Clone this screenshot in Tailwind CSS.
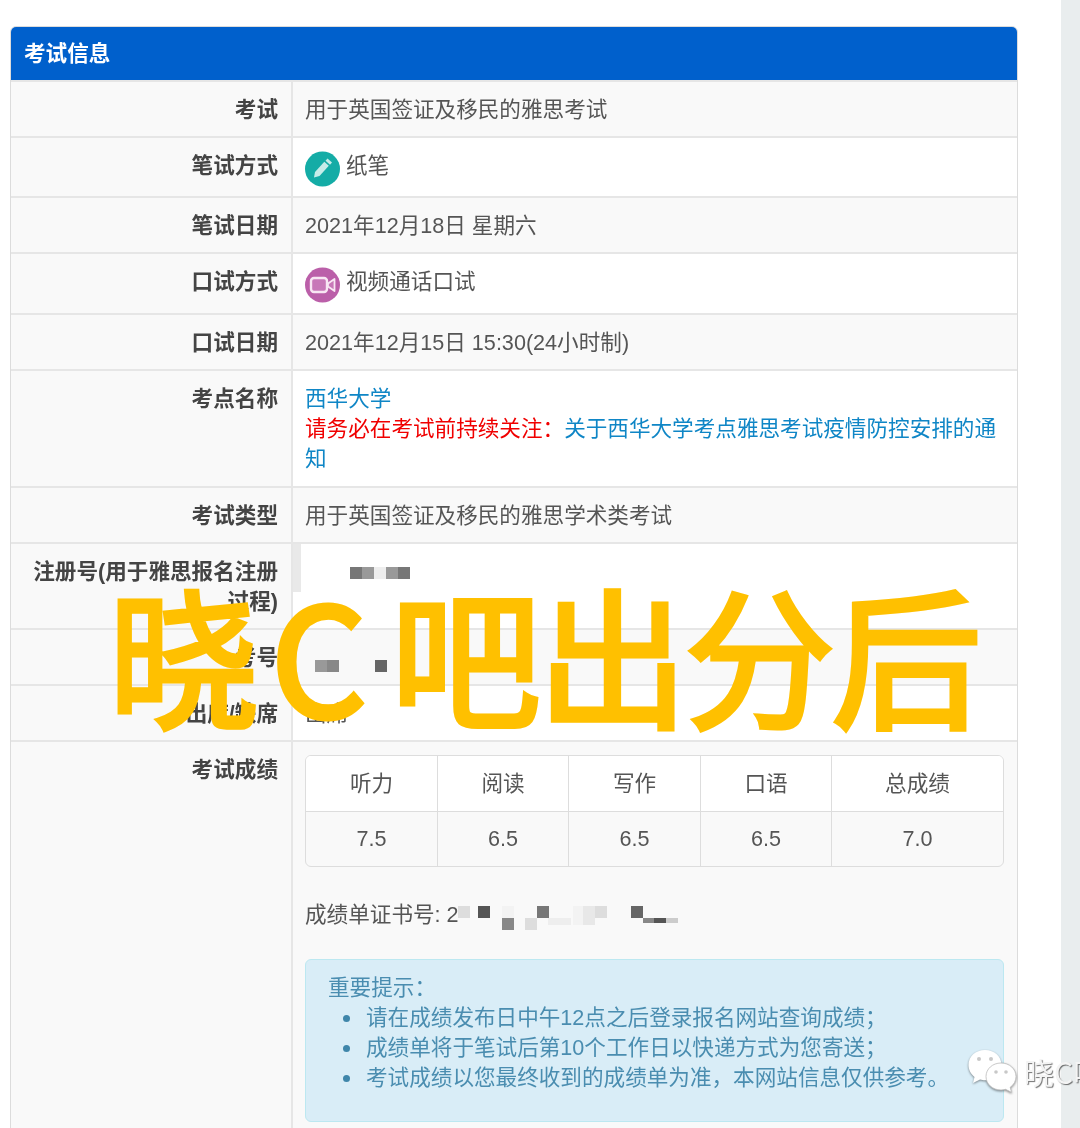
<!DOCTYPE html>
<html lang="zh-CN">
<head>
  <meta charset="UTF-8"/>
  <title>考试信息</title>
  <script src="https://cdn.jsdelivr.net/npm/@tailwindcss/browser@4"></script>
</head>
<body class="bg-white">
<div class="relative flex h-[1128px] w-[1080px] overflow-hidden font-['Liberation_Sans','Noto_Sans_CJK_SC',sans-serif] text-[21.6px] leading-[30px] text-[#555] blur-[0.6px]">

  <!-- left column -->
  <main class="w-[1061px] shrink-0 pl-[10px] pt-[26px]">
    <section class="w-[1008px] rounded-t-[6px] border border-[#dcdcdc]">
      <h2 class="flex h-[53px] items-center rounded-t-[5px] bg-[#0060cc] pl-[13px] font-bold text-white">考试信息</h2>

      <table class="w-full table-fixed border-collapse">
        <colgroup><col class="w-[281px]"/><col/></colgroup>
        <tbody>
          <tr class="h-[56px] bg-[#f9f9f9]">
            <th class="border-t-2 border-[#e6e6e6] px-[13px] pt-[13px] pb-[11px] text-right align-top font-bold text-[#444]">考试</th>
            <td class="border-t-2 border-l-2 border-[#e6e6e6] px-[12px] pt-[13px] pb-[11px] align-top">用于英国签证及移民的雅思考试</td>
          </tr>
          <tr class="h-[60px]">
            <th class="border-t-2 border-[#e6e6e6] bg-[#f9f9f9] px-[13px] pt-[13px] pb-[11px] text-right align-top font-bold text-[#444]">笔试方式</th>
            <td class="border-t-2 border-l-2 border-[#e6e6e6] bg-white px-[12px] pt-[13px] align-top">
              <span class="flex items-start gap-[6px]">
                <svg class="shrink-0" width="35" height="36" viewBox="0 0 35 36">
                  <circle cx="17.5" cy="18" r="17.5" fill="#14aca6"/>
                  <path d="M22.500 7.500l4.500 4-2 2.200-4.500-4z" fill="#c7ece9"/>
                  <path d="M19.300 10.800l4.500 4-9.300 10.200-5.500 1.500 1-5.500z" fill="#c7ece9"/>
                </svg>
                <span>纸笔</span>
              </span>
            </td>
          </tr>
          <tr class="h-[56px] bg-[#f9f9f9]">
            <th class="border-t-2 border-[#e6e6e6] px-[13px] pt-[13px] pb-[11px] text-right align-top font-bold text-[#444]">笔试日期</th>
            <td class="border-t-2 border-l-2 border-[#e6e6e6] px-[12px] pt-[13px] pb-[11px] align-top">2021年12月18日 星期六</td>
          </tr>
          <tr class="h-[61px]">
            <th class="border-t-2 border-[#e6e6e6] bg-[#f9f9f9] px-[13px] pt-[13px] pb-[11px] text-right align-top font-bold text-[#444]">口试方式</th>
            <td class="border-t-2 border-l-2 border-[#e6e6e6] bg-white px-[12px] pt-[13px] align-top">
              <span class="flex items-start gap-[6px]">
                <svg class="shrink-0" width="35" height="36" viewBox="0 0 35 36">
                  <circle cx="17.500" cy="18" r="17.500" fill="#bb5fa9"/>
                  <rect x="6" y="11" width="16" height="14" rx="3" fill="#c878b8" stroke="#f8e6f3" stroke-width="2.400"/>
                  <path d="M23 16.500l6.500-4.500v12l-6.500-4.500z" fill="#c878b8" stroke="#f8e6f3" stroke-width="1.800" stroke-linejoin="round"/>
                </svg>
                <span>视频通话口试</span>
              </span>
            </td>
          </tr>
          <tr class="h-[56px] bg-[#f9f9f9]">
            <th class="border-t-2 border-[#e6e6e6] px-[13px] pt-[13px] pb-[11px] text-right align-top font-bold text-[#444]">口试日期</th>
            <td class="border-t-2 border-l-2 border-[#e6e6e6] px-[12px] pt-[13px] pb-[11px] align-top">2021年12月15日 15:30(24小时制)</td>
          </tr>
          <tr>
            <th class="border-t-2 border-[#e6e6e6] bg-[#f9f9f9] px-[13px] pt-[13px] pb-[12px] text-right align-top font-bold text-[#444]">考点名称</th>
            <td class="border-t-2 border-l-2 border-[#e6e6e6] bg-white px-[12px] pt-[13px] pb-[12px] align-top">
              <a class="block text-[#0f86c6]">西华大学</a>
              <span class="text-[#f00000]">请务必在考试前持续关注：</span><a class="text-[#0f86c6]">关于西华大学考点雅思考试疫情防控安排的通知</a>
            </td>
          </tr>
          <tr class="h-[56px] bg-[#f9f9f9]">
            <th class="border-t-2 border-[#e6e6e6] px-[13px] pt-[13px] pb-[11px] text-right align-top font-bold text-[#444]">考试类型</th>
            <td class="border-t-2 border-l-2 border-[#e6e6e6] px-[12px] pt-[13px] pb-[11px] align-top">用于英国签证及移民的雅思学术类考试</td>
          </tr>
          <tr>
            <th class="border-t-2 border-[#e6e6e6] bg-[#f9f9f9] px-[13px] pt-[13px] pb-[11px] text-right align-top font-bold text-[#444]">注册号(用于雅思报名注册过程)</th>
            <td class="relative border-t-2 border-l-2 border-[#e6e6e6] bg-white align-top">
              <span class="absolute left-0 top-0 h-[48px] w-[8px] bg-[#e9e9e9]"></span>
              <span class="absolute left-[57px] top-[23px] flex h-[12px]">
                <i class="w-[12px] bg-[#777]"></i><i class="w-[12px] bg-[#999]"></i><i class="w-[12px] bg-[#eee]"></i><i class="w-[12px] bg-[#999]"></i><i class="w-[12px] bg-[#777]"></i>
              </span>
            </td>
          </tr>
          <tr class="h-[56px] bg-[#f9f9f9]">
            <th class="border-t-2 border-[#e6e6e6] px-[13px] pt-[13px] pb-[11px] text-right align-top font-bold text-[#444]">考号</th>
            <td class="relative border-t-2 border-l-2 border-[#e6e6e6] align-top">
              <span class="absolute left-[22px] top-[30px] flex h-[12px]">
                <i class="w-[12px] bg-[#999]"></i><i class="w-[12px] bg-[#888]"></i><i class="w-[36px]"></i><i class="w-[12px] bg-[#666]"></i>
              </span>
            </td>
          </tr>
          <tr class="h-[56px]">
            <th class="border-t-2 border-[#e6e6e6] bg-[#f9f9f9] px-[13px] pt-[13px] pb-[11px] text-right align-top font-bold text-[#444]">出席/缺席</th>
            <td class="border-t-2 border-l-2 border-[#e6e6e6] bg-white px-[12px] pt-[13px] pb-[11px] align-top">出席</td>
          </tr>
          <tr class="bg-[#f9f9f9]">
            <th class="border-t-2 border-[#e6e6e6] px-[13px] pt-[13px] text-right align-top font-bold text-[#444]">考试成绩</th>
            <td class="border-t-2 border-l-2 border-[#e6e6e6] pl-[12px] pr-[13px] pt-[13px] pb-[30px] align-top">

              <div class="grid grid-cols-[131px_131px_132px_131px_1fr] overflow-hidden rounded-[6px] border border-[#ddd] text-center">
                <div class="flex h-[55px] items-center justify-center bg-white">听力</div>
                <div class="flex h-[55px] items-center justify-center border-l border-[#ddd] bg-white">阅读</div>
                <div class="flex h-[55px] items-center justify-center border-l border-[#ddd] bg-white">写作</div>
                <div class="flex h-[55px] items-center justify-center border-l border-[#ddd] bg-white">口语</div>
                <div class="flex h-[55px] items-center justify-center border-l border-[#ddd] bg-white">总成绩</div>
                <div class="flex h-[55px] items-center justify-center border-t border-[#ddd]">7.5</div>
                <div class="flex h-[55px] items-center justify-center border-t border-l border-[#ddd]">6.5</div>
                <div class="flex h-[55px] items-center justify-center border-t border-l border-[#ddd]">6.5</div>
                <div class="flex h-[55px] items-center justify-center border-t border-l border-[#ddd]">6.5</div>
                <div class="flex h-[55px] items-center justify-center border-t border-l border-[#ddd]">7.0</div>
              </div>

              <p class="relative mt-[33px]">成绩单证书号: 2
                <!-- mosaic -->
                <i class="absolute left-[153px] top-[6px] h-[12px] w-[12px] bg-[#ddd]"></i>
                <i class="absolute left-[173px] top-[6px] h-[12px] w-[12px] bg-[#555]"></i>
                <i class="absolute left-[197px] top-[6px] h-[12px] w-[12px] bg-[#f3f3f3]"></i>
                <i class="absolute left-[197px] top-[18px] h-[12px] w-[12px] bg-[#888]"></i>
                <i class="absolute left-[220px] top-[18px] h-[12px] w-[12px] bg-[#ddd]"></i>
                <i class="absolute left-[232px] top-[6px] h-[12px] w-[12px] bg-[#777]"></i>
                <i class="absolute left-[243px] top-[18px] h-[7px] w-[23px] bg-[#eee]"></i>
                <i class="absolute left-[268px] top-[6px] h-[19px] w-[10px] bg-[#f3f3f3]"></i>
                <i class="absolute left-[278px] top-[6px] h-[19px] w-[12px] bg-[#e8e8e8]"></i>
                <i class="absolute left-[290px] top-[6px] h-[12px] w-[12px] bg-[#ddd]"></i>
                <i class="absolute left-[326px] top-[6px] h-[12px] w-[12px] bg-[#666]"></i>
                <i class="absolute left-[338px] top-[18px] h-[5px] w-[11px] bg-[#888]"></i>
                <i class="absolute left-[349px] top-[18px] h-[5px] w-[12px] bg-[#555]"></i>
                <i class="absolute left-[361px] top-[18px] h-[5px] w-[12px] bg-[#ccc]"></i>
              </p>

              <div class="mt-[29px] h-[163px] rounded-[6px] border border-[#bce8f1] bg-[#d9edf7] px-[22px] pt-[13px] text-[#4a8db0]">
                <p>重要提示：</p>
                <ul class="pl-[15px]">
                  <li class="flex items-center gap-[16px]"><i class="h-[7px] w-[7px] shrink-0 rounded-full bg-[#3f86aa]"></i>请在成绩发布日中午12点之后登录报名网站查询成绩；</li>
                  <li class="flex items-center gap-[16px]"><i class="h-[7px] w-[7px] shrink-0 rounded-full bg-[#3f86aa]"></i>成绩单将于笔试后第10个工作日以快递方式为您寄送；</li>
                  <li class="flex items-center gap-[16px]"><i class="h-[7px] w-[7px] shrink-0 rounded-full bg-[#3f86aa]"></i>考试成绩以您最终收到的成绩单为准，本网站信息仅供参考。</li>
                </ul>
              </div>
            </td>
          </tr>
        </tbody>
      </table>
    </section>
  </main>

  <!-- right gutter -->
  <aside class="flex-1 bg-[#e9edee]"></aside>

  <!-- headline stamped over the screenshot -->
  <div class="absolute left-[109px] top-[552px] flex items-center whitespace-nowrap font-['Noto_Sans_CJK_SC',sans-serif] text-[150px] leading-[200px] font-normal text-[#ffc000] [-webkit-text-stroke:5px_#ffc000]">
    <span>晓</span><span class="ml-[12px] mr-[24px]">C</span><span class="tracking-[-3px]">吧出分后</span>
  </div>

  <!-- wechat watermark -->
  <div class="absolute left-[967px] top-[1048px] flex items-center whitespace-nowrap">
    <svg width="52" height="46" viewBox="0 0 52 46" class="drop-shadow-[0_1px_1px_rgba(0,0,0,0.45)]">
      <path d="M18 2C8.500 2 1.500 8.500 1.500 17c0 5 2.500 9 6 12l-1.500 6 7-3.500c2 .5 3.500 .8 5 .8 9.500 0 16.500-6.800 16.500-15.300S27.500 2 18 2z" fill="#fff"/>
      <circle cx="12" cy="11" r="2" fill="#c8c8c8"/><circle cx="24" cy="11" r="2" fill="#c8c8c8"/>
      <path d="M34 15c-8.500 0-15 6-15 13.500S25.500 42 34 42c1.500 0 3-.2 4.500-.7l6 3-1.300-5c3.500-2.500 5.800-6.300 5.800-10.800C49 21 42.500 15 34 15z" fill="#fff" stroke="#bbb" stroke-width=".8"/>
      <circle cx="29" cy="24" r="1.800" fill="#c8c8c8"/><circle cx="39" cy="24" r="1.800" fill="#c8c8c8"/>
    </svg>
    <span class="ml-[5px] font-['Noto_Sans_CJK_SC',sans-serif] text-[30px] leading-[46px] text-[#f4f4f4] [text-shadow:1px_1px_1px_rgba(0,0,0,0.55)]">晓C吧</span>
  </div>
</div>
</body>
</html>
